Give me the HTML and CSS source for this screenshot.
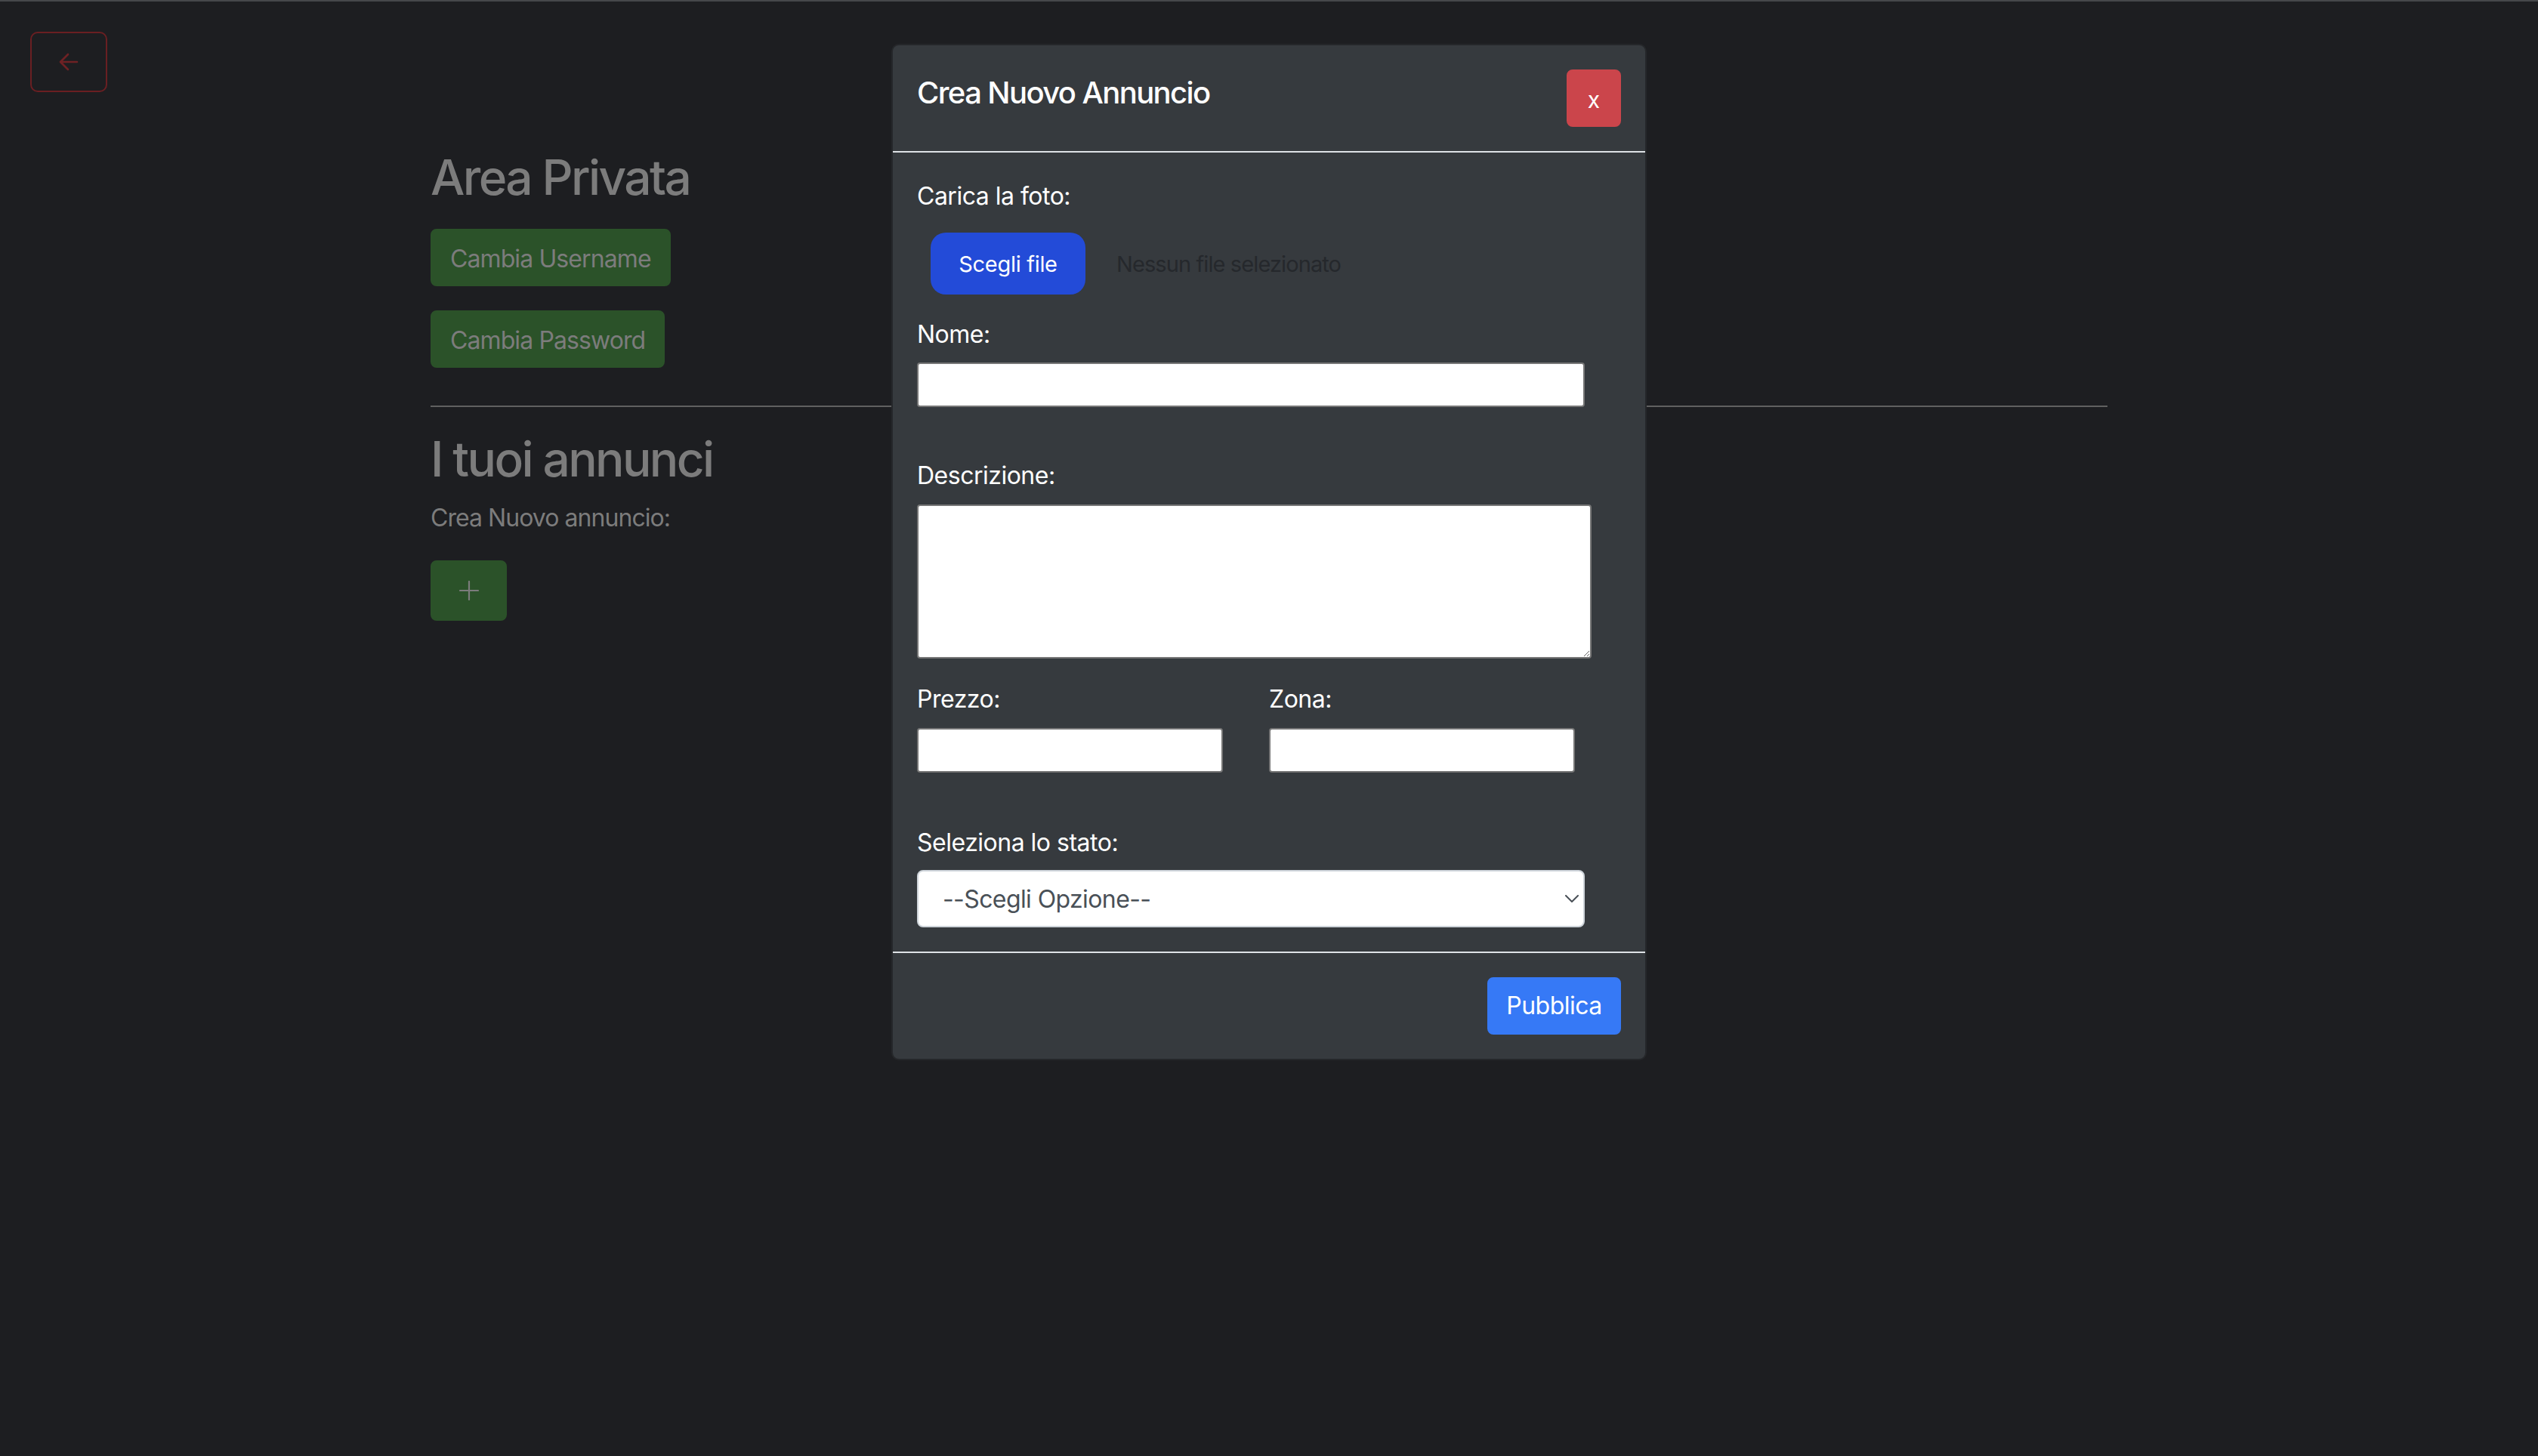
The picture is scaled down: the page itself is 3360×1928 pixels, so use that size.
FILE: index.html
```html
<!DOCTYPE html>
<html lang="it">
<head>
<meta charset="utf-8">
<title>Area Privata</title>
<link rel="stylesheet" href="styles.css">
</head>
<body>
<div class="page">
  <div class="topbar">
    <button class="back-btn" type="button" aria-label="Indietro">
      <svg width="26" height="24" viewBox="0 0 26 24" fill="none" stroke="currentColor" stroke-width="2.6" stroke-linecap="round" stroke-linejoin="round"><path d="M24 12H2M12 2L2 12l10 10"/></svg>
    </button>
  </div>
  <main class="container">
    <h2 class="heading heading-first">Area Privata</h2>
    <div class="actions">
      <button class="btn btn-green" type="button">Cambia Username</button>
      <button class="btn btn-green" type="button">Cambia Password</button>
    </div>
    <hr class="divider">
    <section class="ads">
      <h2 class="heading">I tuoi annunci</h2>
      <p class="hint">Crea Nuovo annuncio:</p>
      <button class="btn btn-green btn-plus" type="button" aria-label="Aggiungi">
        <svg width="26" height="26" viewBox="0 0 26 26" stroke="currentColor" stroke-width="2.2" stroke-linecap="round"><path d="M13 1v24M1 13h24"/></svg>
      </button>
    </section>
  </main>

  <div class="modal">
    <div class="modal-header">
      <h5 class="modal-title">Crea Nuovo Annuncio</h5>
      <button class="btn btn-close" type="button">x</button>
    </div>
    <div class="modal-body">
      <label class="field-label">Carica la foto:</label>
      <div class="file-row">
        <span class="file-btn">Scegli file</span>
        <span class="file-name">Nessun file selezionato</span>
      </div>
      <label class="field-label lbl-nome">Nome:</label>
      <input class="text-input input-wide" type="text">
      <label class="field-label lbl-desc">Descrizione:</label>
      <textarea class="text-area"></textarea>
      <div class="two-cols">
        <div class="col">
          <label class="field-label">Prezzo:</label>
          <input class="text-input input-half" type="text">
        </div>
        <div class="col">
          <label class="field-label">Zona:</label>
          <input class="text-input input-half" type="text">
        </div>
      </div>
      <label class="field-label lbl-stato">Seleziona lo stato:</label>
      <div class="select-wrap">
        <select class="select">
          <option>--Scegli Opzione--</option>
        </select>
        <svg class="chevron" width="18" height="10" viewBox="0 0 18 10" fill="none" stroke="#495057" stroke-width="2" stroke-linecap="round" stroke-linejoin="round"><path d="M1 1l8 8 8-8"/></svg>
      </div>
    </div>
    <div class="modal-footer">
      <button class="btn btn-primary" type="button">Pubblica</button>
    </div>
  </div>
</div>
</body>
</html>
```

FILE: styles.css
```css
* { box-sizing: border-box; }

html, body {
  margin: 0;
  padding: 0;
  background: #1d1e21;
}

body {
  font-family: Inter, "Noto Sans", "Liberation Sans", sans-serif;
  width: 3360px;
  height: 1928px;
  overflow: hidden;
}

.page {
  position: relative;
  height: 1928px;
  border-top: 2px solid #46484b;
}

.topbar {
  padding: 40px 0 0 40px;
}

.back-btn {
  width: 102px;
  height: 80px;
  border: 2px solid #6a1f22;
  border-radius: 10px;
  background: transparent;
  color: #6e2124;
  display: flex;
  align-items: center;
  justify-content: center;
  padding: 0;
}

.container {
  width: 2220px;
  margin: 0 auto;
}

.heading {
  margin: 0;
  font-size: 64px;
  line-height: 1.2;
  font-weight: 500;
  color: #7c7c7c;
  letter-spacing: -2.6px;
}

.heading-first {
  margin-top: 75px;
}

.actions {
  margin-top: 29px;
  display: flex;
  flex-direction: column;
  align-items: flex-start;
  gap: 32px;
}

.btn {
  font-family: inherit;
  font-size: 32px;
  line-height: 48px;
  padding: 12px 24px;
  border: 2px solid transparent;
  border-radius: 8px;
  cursor: pointer;
}

.btn-green {
  background: #2b5229;
  border-color: #2b5229;
  color: #7c7c7c;
  letter-spacing: -0.9px;
  padding-top: 14px;
  padding-bottom: 10px;
}

.divider {
  margin: 50px 0 0 0;
  border: 0;
  height: 2px;
  background: #606060;
}

.ads {
  padding-top: 31px;
}

.hint {
  margin: 15px 0 0 0;
  font-size: 32px;
  line-height: 48px;
  color: #7c7c7c;
  letter-spacing: -0.95px;
}

.btn-plus {
  margin-top: 32px;
  width: 101px;
  height: 80px;
  padding: 0;
  display: flex;
  align-items: center;
  justify-content: center;
  color: #7c7c7c;
}

/* modal */
.modal {
  position: absolute;
  top: 56px;
  left: 1180px;
  width: 1000px;
  background: #363a3e;
  border: 2px solid #25272a;
  border-radius: 10px;
  color: #ffffff;
}

.modal-header {
  display: flex;
  justify-content: space-between;
  align-items: flex-start;
  padding: 32px;
  border-bottom: 2px solid #dee2e6;
}

.modal-title {
  margin: 2px 0 0 0;
  font-size: 40px;
  line-height: 58px;
  font-weight: 500;
  letter-spacing: -1.6px;
}

.btn-close {
  width: 72px;
  height: 76px;
  padding: 0;
  background: #cb454b;
  border-color: #cb454b;
  color: #fff;
  font-size: 30px;
  line-height: 1;
  padding-top: 4px;
}

.modal-body {
  padding: 32px;
}

.field-label {
  display: block;
  font-size: 32px;
  line-height: 48px;
  padding-top: 2px;
  color: #ffffff;
  letter-spacing: -0.5px;
  margin-bottom: 14px;
}

.file-row {
  display: flex;
  align-items: center;
  margin-top: 24px;
  padding-left: 18px;
}

.file-btn {
  display: flex;
  align-items: center;
  justify-content: center;
  width: 205px;
  height: 82px;
  background: #234bd8;
  border-radius: 20px;
  color: #ffffff;
  font-size: 29px;
  letter-spacing: -0.3px;
}

.file-name {
  margin-left: 41px;
  font-size: 29px;
  color: #25282c;
  letter-spacing: -0.9px;
}

.lbl-nome { margin-top: 27px; margin-bottom: 13px; }

.text-input {
  display: block;
  height: 59px;
  background: #ffffff;
  border: 2px solid #767676;
  border-radius: 4px;
  margin: 0;
  font-size: 26px;
  padding: 2px 4px;
}

.input-wide { width: 884px; }
.input-half { width: 405px; }

.lbl-desc { margin-top: 65px; }

.text-area {
  display: block;
  width: 893px;
  height: 204px;
  background: #ffffff;
  border: 2px solid #767676;
  border-radius: 4px;
  margin: 0;
  font-size: 26px;
}

.two-cols {
  display: grid;
  grid-template-columns: 466px 466px;
  margin-top: 28px;
}

.lbl-stato { margin-top: 67px; margin-bottom: 12px; }

.select-wrap {
  position: relative;
  width: 884px;
}

.select {
  appearance: none;
  -webkit-appearance: none;
  display: block;
  width: 884px;
  height: 76px;
  background: #ffffff;
  border: 2px solid #ced4da;
  border-radius: 8px;
  padding: 0 32px;
  font-family: inherit;
  font-size: 32px;
  color: #495057;
  letter-spacing: -0.6px;
}

.chevron {
  position: absolute;
  top: 33px;
  right: 8px;
  pointer-events: none;
}

.modal-footer {
  display: flex;
  justify-content: flex-end;
  padding: 32px;
  border-top: 2px solid #dee2e6;
}

.btn-primary {
  background: #3679f6;
  border-color: #3679f6;
  color: #ffffff;
  width: 177px;
  height: 76px;
  padding: 0;
  letter-spacing: -0.5px;
}
```
